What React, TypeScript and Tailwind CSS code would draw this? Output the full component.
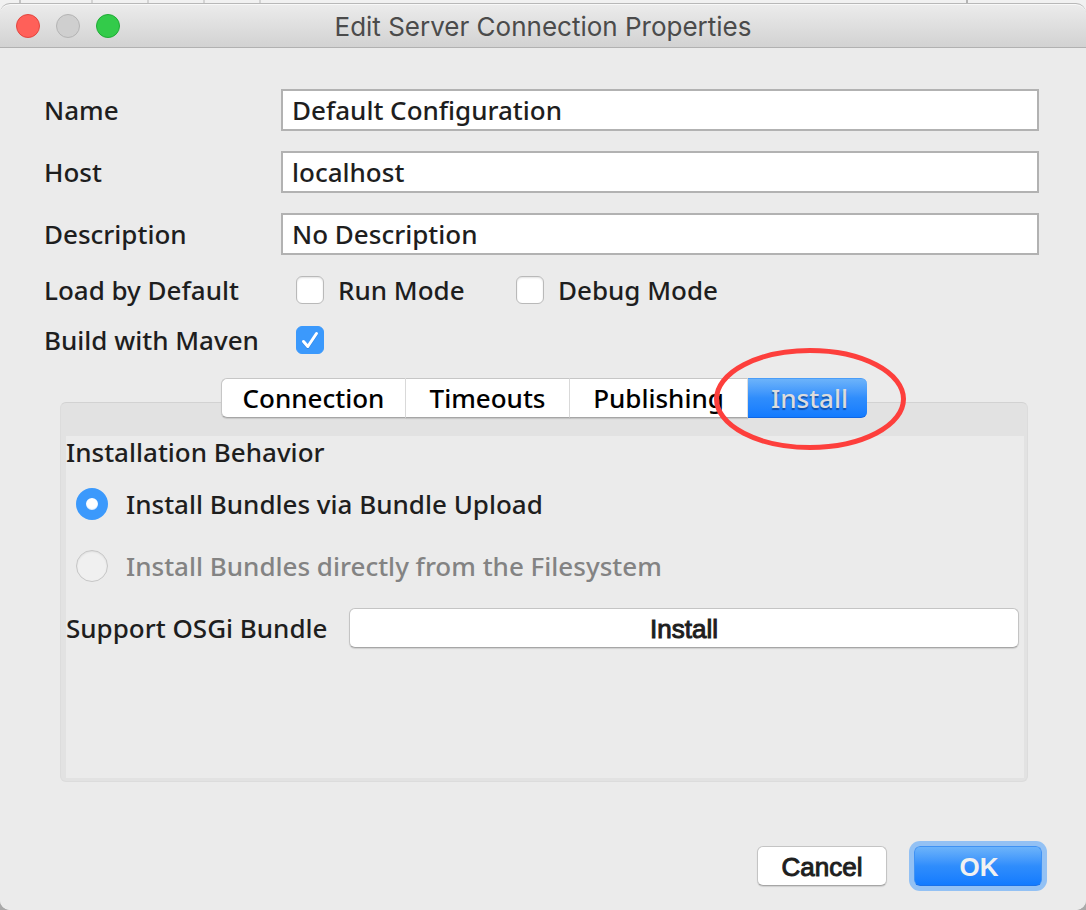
import { useState } from "react";
import type { ReactNode } from "react";

const TABS = [
  { name: "Connection", width: "w-[185px]" },
  { name: "Timeouts", width: "w-[164px]" },
  { name: "Publishing", width: "w-[178px]" },
  { name: "Install", width: "w-[119px]" },
];

const BUTTON =
  "h-10 rounded-md border border-[#c4c4c4] border-b-[#a6a6a6] bg-white pt-0.5 font-['Liberation_Sans',sans-serif] text-[26px] leading-8 font-normal text-[#1e1e1e] shadow-[0_1px_1px_rgba(0,0,0,0.12)] [-webkit-text-stroke:1px_currentColor]";

function TitleBar({ title }: { title: string }) {
  return (
    <header className="grid h-[45px] grid-cols-[1fr_auto_1fr] items-center rounded-t-[10px] border-t border-b border-t-[#b8b8b8] border-b-[#b1b1b1] bg-linear-to-b from-[#ececec] to-[#d2d2d2] px-4 shadow-[inset_0_1px_0_#f8f8f8]">
      <div className="flex gap-4">
        <button aria-label="Close" className="size-6 rounded-full border border-[#e2463f] bg-[#ff6059]" />
        <button aria-label="Minimize" disabled className="size-6 rounded-full border border-[#b4b4b4] bg-[#cfcfcf]" />
        <button aria-label="Zoom" className="size-6 rounded-full border border-[#1fab35] bg-[#33cb4a]" />
      </div>
      <h1 className="pt-0.5 font-[Inter,sans-serif] text-[26px] leading-8 font-normal text-[#4b4b4b]">{title}</h1>
    </header>
  );
}

function TextRow({ id, label, value }: { id: string; label: string; value: string }) {
  return (
    <div className="flex items-center">
      <label htmlFor={id} className="w-[237px] shrink-0">{label}</label>
      <input
        id={id}
        type="text"
        defaultValue={value}
        className="h-[42px] min-w-0 flex-1 border-2 border-[#b2b2b2] bg-white px-[9px] outline-none"
      />
    </div>
  );
}

function CheckBox({ id, label, checked }: { id: string; label?: string; checked?: boolean }) {
  return (
    <div className="flex items-center gap-3.5">
      <span className="grid size-7">
        <input
          id={id}
          type="checkbox"
          defaultChecked={checked}
          className="peer col-start-1 row-start-1 size-7 appearance-none rounded-md border border-[#b9b9b9] bg-white shadow-[inset_0_1px_2px_rgba(0,0,0,0.12)] checked:border-[#3b99fc] checked:bg-[#3b99fc] checked:shadow-none"
        />
        <svg viewBox="0 0 28 28" className="pointer-events-none invisible col-start-1 row-start-1 size-7 peer-checked:visible" fill="none" strokeLinecap="round" strokeLinejoin="round" strokeWidth="3">
          <path d="M7.5 16.5 11.8 21.5 20.5 8.5" stroke="#2f86e4" />
          <path d="M7.5 15.5 11.8 20.5 20.5 7.5" stroke="#fff" />
        </svg>
      </span>
      {label && <label htmlFor={id}>{label}</label>}
    </div>
  );
}

function Radio({ id, label, checked, disabled }: { id: string; label: string; checked?: boolean; disabled?: boolean }) {
  return (
    <div className="flex h-8 items-center gap-[18px]">
      <input
        id={id}
        type="radio"
        name="install-behavior"
        defaultChecked={checked}
        disabled={disabled}
        className="peer size-8 shrink-0 appearance-none rounded-full border border-[#c6c6c6] bg-[#f0f0f0] shadow-[inset_0_1px_2px_rgba(0,0,0,0.08)] checked:border-10 checked:border-[#3b99fc] checked:bg-white checked:shadow-[inset_0_-1px_1px_#d9ecff]"
      />
      <label htmlFor={id} className="peer-disabled:text-[#838383]">{label}</label>
    </div>
  );
}

function Row({ label, htmlFor, children }: { label: string; htmlFor?: string; children: ReactNode }) {
  return (
    <div className="flex h-[50px] items-center">
      {htmlFor ? (
        <label htmlFor={htmlFor} className="w-[252px] shrink-0">{label}</label>
      ) : (
        <span className="w-[252px] shrink-0">{label}</span>
      )}
      {children}
    </div>
  );
}

export default function App() {
  const [active, setActive] = useState("Install");

  return (
    <div className="min-h-screen bg-[#a9a9a9] font-['Noto_Sans',sans-serif] text-[26px] leading-8 font-medium text-[#1e1e1e]">
      <div className="flex min-h-screen flex-col rounded-b-[10px] bg-[#f1f1f1]">
        <div aria-hidden="true" className="flex h-[3px]">
          <i className="w-[21px] border-r-2 border-[#c4c4c4]" />
          <i className="w-[72px] border-r-2 border-[#d4d4d4]" />
          <i className="w-14 border-r-2 border-[#d4d4d4]" />
          <i className="w-14 border-r-2 border-[#d4d4d4]" />
          <i className="w-14 border-r-2 border-[#d4d4d4]" />
          <i className="flex-1 border-r-2 border-[#b4b4b4]" />
          <i className="w-[118px]" />
        </div>
        <div className="flex flex-1 flex-col rounded-[10px] bg-[#ebebeb]">
          <TitleBar title="Edit Server Connection Properties" />
          <form className="flex flex-1 flex-col pt-[41px] pb-6" onSubmit={(e) => e.preventDefault()}>
            <div className="flex flex-col gap-5 pr-[47px] pl-11">
              <TextRow id="name" label="Name" value="Default Configuration" />
              <TextRow id="host" label="Host" value="localhost" />
              <TextRow id="description" label="Description" value="No Description" />
            </div>
            <div className="mt-2.5 px-11">
              <Row label="Load by Default">
                <div className="flex">
                  <div className="w-[220px]"><CheckBox id="run" label="Run Mode" /></div>
                  <CheckBox id="debug" label="Debug Mode" />
                </div>
              </Row>
              <Row label="Build with Maven" htmlFor="maven">
                <CheckBox id="maven" checked />
              </Row>
            </div>

            <div role="tablist" className="z-10 mt-[13px] -mb-4 flex justify-center pl-0.5">
              {TABS.map((tab) => {
                const selected = tab.name === active;
                return (
                  <div key={tab.name} className="group relative">
                    <button
                      type="button"
                      role="tab"
                      aria-selected={selected}
                      onClick={() => setActive(tab.name)}
                      className={`${tab.width} h-10 border-y group-first:rounded-l-md group-first:border-l group-last:rounded-r-md ${
                        selected
                          ? "border-t-[#4a9df8] border-b-[#0f66e4] bg-linear-to-b from-[#6cb3fa] via-[#2f8dfc] to-[#127bff] pl-1 text-[#dcdcdc] [text-shadow:0_2px_1px_rgba(0,40,110,0.55)]"
                          : "border-r border-r-[#dedede] border-t-[#c6c6c6] border-b-[#a6a6a6] border-l-[#c6c6c6] bg-white text-black shadow-[0_1px_1px_rgba(0,0,0,0.12)]"
                      }`}
                    >
                      {tab.name}
                    </button>
                    {tab.name === "Install" && (
                      <svg aria-hidden="true" viewBox="0 0 192 102" className="pointer-events-none absolute -top-[30px] -left-[34px] h-[102px] w-[192px]" fill="none">
                        <ellipse cx="96" cy="51" rx="93.5" ry="48.5" stroke="#fd3f3c" strokeWidth="5" />
                      </svg>
                    )}
                  </div>
                );
              })}
            </div>

            <section role="tabpanel" aria-label="Install" className="mr-[58px] ml-[60px] flex min-h-[380px] flex-1 flex-col rounded-md border border-[#dcdcdc] border-t-[#d2d2d2] bg-[#e2e2e2] pt-[33px] pr-[3px] pb-[3px] pl-[5px]">
              <div className="flex-1 bg-[#ebebeb]">
                <h2 className="font-medium">Installation Behavior</h2>
                <div className="mt-5 flex flex-col gap-[30px] pl-2.5">
                  <Radio id="upload" label="Install Bundles via Bundle Upload" checked />
                  <Radio id="filesystem" label="Install Bundles directly from the Filesystem" disabled />
                </div>
                <div className="mt-[26px] flex items-center pr-[5px]">
                  <label htmlFor="install" className="w-[283px] shrink-0">Support OSGi Bundle</label>
                  <button id="install" type="button" className={`${BUTTON} flex-1`}>Install</button>
                </div>
              </div>
            </section>

            <footer className="mt-16 flex justify-end gap-[27px] pr-11">
              <button type="button" className={`${BUTTON} w-[130px]`}>Cancel</button>
              <button type="submit" className="h-10 w-32 rounded-md border border-[#3f92f4] border-b-[#1a72ea] bg-linear-to-b from-[#6cb3fa] via-[#2f8dfc] to-[#127bff] pt-0.5 pl-0.5 font-['Liberation_Sans',sans-serif] leading-8 font-bold text-[#f1f1f1] ring-[5px] ring-[#93c1f4]">OK</button>
            </footer>
          </form>
        </div>
      </div>
    </div>
  );
}
